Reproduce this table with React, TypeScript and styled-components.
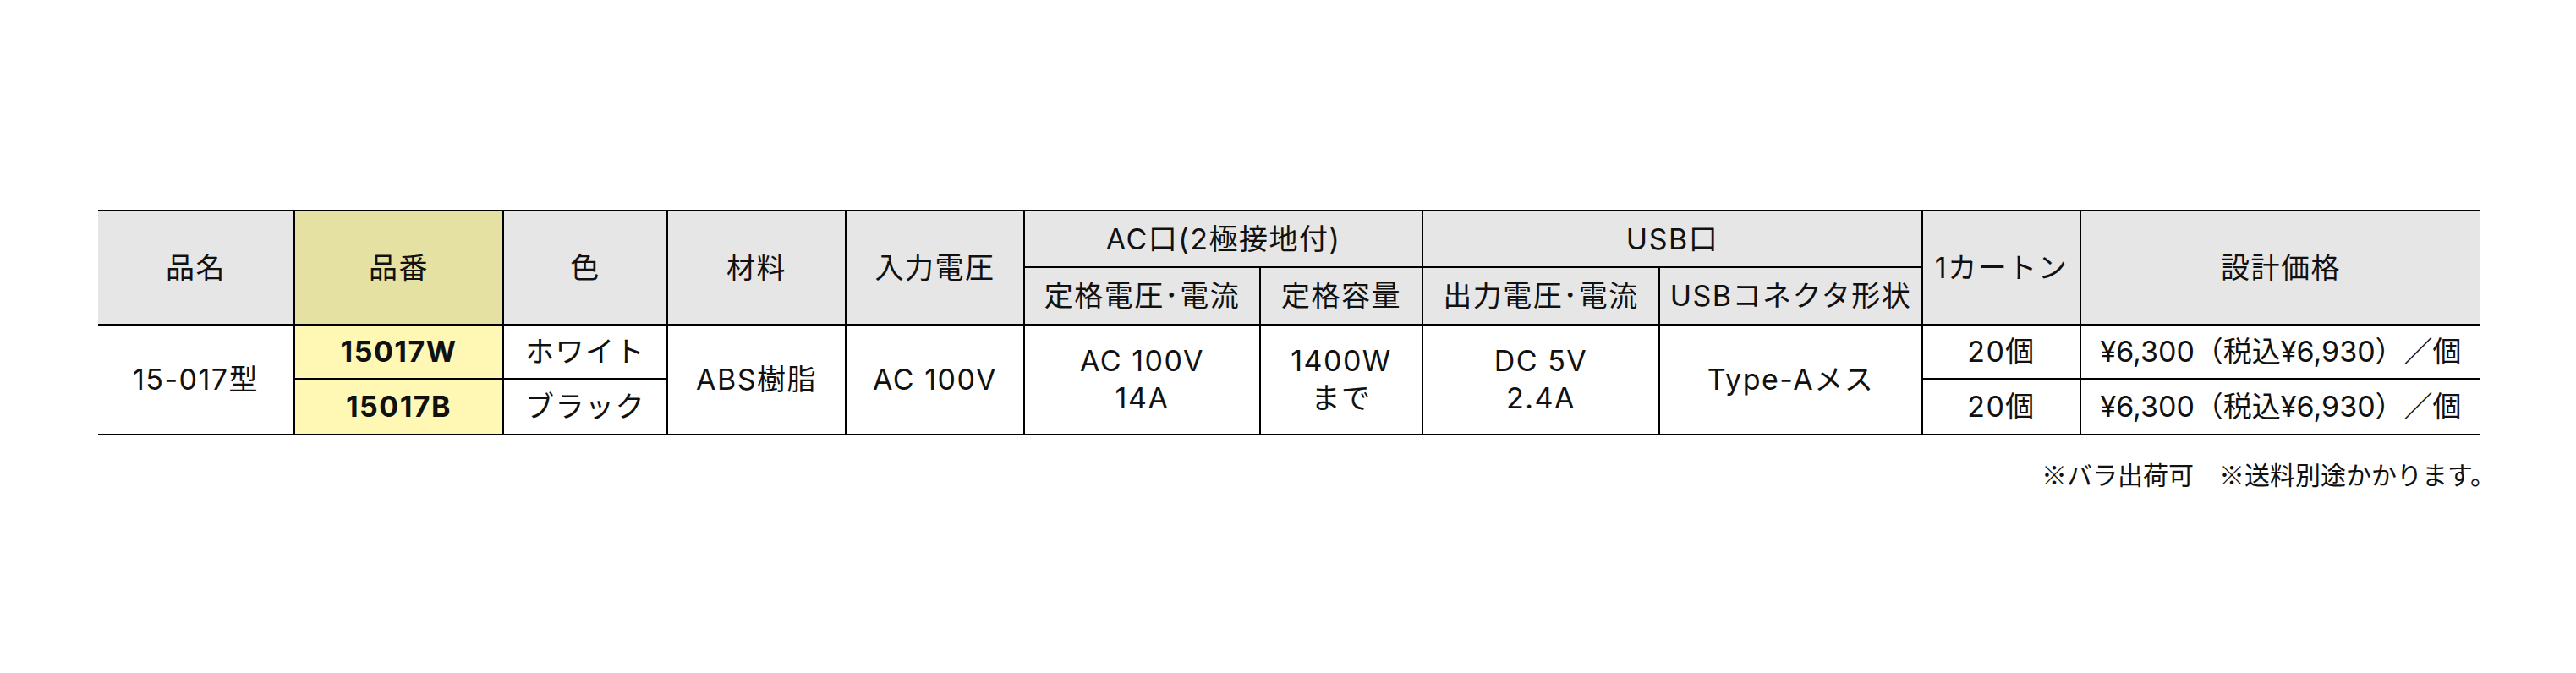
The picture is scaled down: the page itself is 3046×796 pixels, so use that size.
import React from 'react';
import styled, { createGlobalStyle } from 'styled-components';

const GlobalStyle = createGlobalStyle`
  body {
    margin: 0;
    background: #fff;
  }
`;

const Page = styled.div`
  padding: 248px 0 0 116px;
  font-family: Inter, 'Noto Sans CJK JP', sans-serif;
  color: #111;
`;

const Wrap = styled.div`
  width: 2817px;
`;

const SpecTable = styled.table`
  width: 2817px;
  table-layout: fixed;
  border-collapse: collapse;
  border-top: 2px solid #000;
  border-bottom: 2px solid #000;
  border-left: hidden;
  border-right: hidden;
`;

type Tone = 'head' | 'key' | 'keyBody' | 'plain';

const toneColor: Record<Tone, string> = {
  head: '#e6e6e6',
  key: '#e5e1a2',
  keyBody: '#fff8b5',
  plain: '#ffffff',
};

const Cell = styled.td<{ $tone?: Tone; $bold?: boolean; $tight?: boolean }>`
  border: 2px solid #000;
  padding: 0;
  text-align: center;
  vertical-align: middle;
  font-size: 34px;
  line-height: 44px;
  letter-spacing: ${(p) => (p.$tight ? '0' : '1.5px')};
  white-space: nowrap;
  font-weight: ${(p) => (p.$bold ? 700 : 400)};
  background: ${(p) => toneColor[p.$tone || 'plain']};
`;

const Row = styled.tr<{ $h: number }>`
  height: ${(p) => p.$h}px;
`;

const Note = styled.p`
  margin: 26px -18px 0 0;
  text-align: right;
  font-family: 'Noto Sans CJK JP', sans-serif;
  font-size: 30px;
  line-height: 38px;
`;

const widths = [232, 247, 194, 211, 211, 279, 192, 280, 311, 187, 473];

const variants = [
  { code: '15017W', color: 'ホワイト' },
  { code: '15017B', color: 'ブラック' },
];

const price = '¥6,300（税込¥6,930）／個';

export default function App() {
  return (
    <Page>
      <GlobalStyle />
      <Wrap>
        <SpecTable>
          <colgroup>
            {widths.map((w, i) => (
              <col key={i} style={{ width: w }} />
            ))}
          </colgroup>
          <thead>
            <Row $h={67}>
              <Cell as="th" rowSpan={2} $tone="head">品名</Cell>
              <Cell as="th" rowSpan={2} $tone="key">品番</Cell>
              <Cell as="th" rowSpan={2} $tone="head">色</Cell>
              <Cell as="th" rowSpan={2} $tone="head">材料</Cell>
              <Cell as="th" rowSpan={2} $tone="head">入力電圧</Cell>
              <Cell as="th" colSpan={2} $tone="head">AC口(2極接地付)</Cell>
              <Cell as="th" colSpan={2} $tone="head">USB口</Cell>
              <Cell as="th" rowSpan={2} $tone="head">1カートン</Cell>
              <Cell as="th" rowSpan={2} $tone="head">設計価格</Cell>
            </Row>
            <Row $h={68}>
              <Cell as="th" $tone="head">定格電圧･電流</Cell>
              <Cell as="th" $tone="head">定格容量</Cell>
              <Cell as="th" $tone="head">出力電圧･電流</Cell>
              <Cell as="th" $tone="head">USBコネクタ形状</Cell>
            </Row>
          </thead>
          <tbody>
            {variants.map((v, i) => (
              <Row key={v.code} $h={i === 0 ? 64 : 66}>
                {i === 0 && <Cell rowSpan={2}>15-017型</Cell>}
                <Cell $tone="keyBody" $bold>
                  {v.code}
                </Cell>
                <Cell>{v.color}</Cell>
                {i === 0 && (
                  <>
                    <Cell rowSpan={2}>ABS樹脂</Cell>
                    <Cell rowSpan={2}>AC 100V</Cell>
                    <Cell rowSpan={2}>
                      AC 100V
                      <br />
                      14A
                    </Cell>
                    <Cell rowSpan={2}>
                      1400W
                      <br />
                      まで
                    </Cell>
                    <Cell rowSpan={2}>
                      DC 5V
                      <br />
                      2.4A
                    </Cell>
                    <Cell rowSpan={2}>Type-Aメス</Cell>
                  </>
                )}
                <Cell>20個</Cell>
                <Cell $tight>{price}</Cell>
              </Row>
            ))}
          </tbody>
        </SpecTable>
        <Note>※バラ出荷可　※送料別途かかります。</Note>
      </Wrap>
    </Page>
  );
}
